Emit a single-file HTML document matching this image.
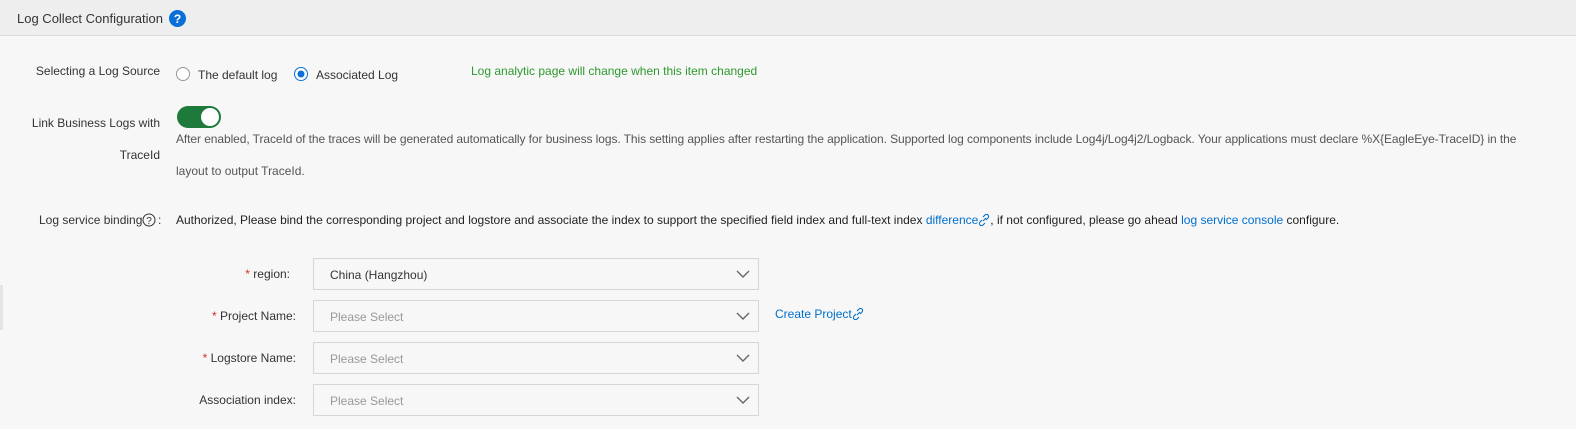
<!DOCTYPE html>
<html><head><meta charset="utf-8"><style>
*{margin:0;padding:0;box-sizing:border-box}
body{width:1576px;height:429px;overflow:hidden;background:#f7f7f7;font-family:"Liberation Sans",sans-serif;font-size:12px;color:#333;position:relative}
.hdr{position:absolute;left:0;top:0;width:1576px;height:36px;background:#eeeeee;border-bottom:1px solid #d9d9d9}
.a{position:absolute;white-space:nowrap;line-height:16px}
.r{text-align:right}
.sel{position:absolute;left:313px;width:446px;height:32px;border:1px solid #d6d6d6;background:#f7f7f7}
.sel span{position:absolute;left:16px;top:8px;line-height:16px;color:#999}
.sel svg{position:absolute;right:8px;top:10px}
.star{color:#d93026}
.lk{color:#0070cc}
.g{color:#555}
</style></head><body>
<div class="hdr"></div>
<div class="a" style="left:17px;top:11px;font-size:13px;color:#333">Log Collect Configuration</div>
<svg style="position:absolute;left:169px;top:10px" width="17" height="17"><circle cx="8.5" cy="8.5" r="8.5" fill="#0a6fd6"/><text x="8.5" y="13" font-size="12" font-weight="bold" fill="#fff" text-anchor="middle" font-family="Liberation Sans">?</text></svg>

<div class="a r" style="right:1416px;top:63px">Selecting a Log Source</div>
<svg style="position:absolute;left:176px;top:67px" width="14" height="14"><circle cx="7" cy="7" r="6.5" fill="#fff" stroke="#999"/></svg>
<div class="a" style="left:198px;top:67px">The default log</div>
<svg style="position:absolute;left:294px;top:67px" width="14" height="14"><circle cx="7" cy="7" r="6.5" fill="#fff" stroke="#0a6fd6"/><circle cx="7" cy="7" r="3.5" fill="#0a6fd6"/></svg>
<div class="a" style="left:316px;top:67px">Associated Log</div>
<div class="a" style="left:471px;top:63px;color:#2e9a2e">Log analytic page will change when this item changed</div>

<div class="a r" style="right:1416px;top:115px">Link Business Logs with</div>
<div class="a r" style="right:1416px;top:147px">TraceId</div>
<div style="position:absolute;left:177px;top:106px;width:44px;height:22px;border-radius:11px;background:#1e7a3a"><div style="position:absolute;right:2px;top:2px;width:18px;height:18px;border-radius:9px;background:#fff"></div></div>
<div class="a g" style="left:176px;top:131px;letter-spacing:-0.08px">After enabled, TraceId of the traces will be generated automatically for business logs. This setting applies after restarting the application. Supported log components include Log4j/Log4j2/Logback. Your applications must declare %X{EagleEye-TraceID} in the</div>
<div class="a g" style="left:176px;top:163px">layout to output TraceId.</div>

<div class="a" style="left:39px;top:212px">Log service binding</div>
<svg style="position:absolute;left:142px;top:213px" width="14" height="14"><circle cx="7" cy="7" r="6" fill="none" stroke="#333"/><text x="7" y="11" font-size="10" fill="#333" text-anchor="middle" font-family="Liberation Sans">?</text></svg>
<div class="a" style="left:158px;top:212px">:</div>
<div class="a" style="left:176px;top:212px;color:#222">Authorized, Please bind the corresponding project and logstore and associate the index to support the specified field index and full-text index <span class="lk">difference<svg width="12" height="12" style="vertical-align:-2px"><path d="M5 7l3-3M4 6l-2 2a2 2 0 003 3l2-2M8 6l2-2a2 2 0 00-3-3L5 3" fill="none" stroke="#0070cc" stroke-width="1.1"/></svg></span>, if not configured, please go ahead <span class="lk">log service console</span> configure.</div>

<div class="a r" style="right:1286px;top:266px"><span class="star">*</span> region:</div>
<div class="sel" style="top:258px"><span style="color:#333">China (Hangzhou)</span><svg width="14" height="10"><path d="M1 2l6 6 6-6" fill="none" stroke="#666" stroke-width="1.4"/></svg></div>
<div class="a r" style="right:1280px;top:308px"><span class="star">*</span> Project Name:</div>
<div class="sel" style="top:300px"><span>Please Select</span><svg width="14" height="10"><path d="M1 2l6 6 6-6" fill="none" stroke="#666" stroke-width="1.4"/></svg></div>
<div class="a lk" style="left:775px;top:306px">Create Project<svg width="12" height="12" style="vertical-align:-2px"><path d="M5 7l3-3M4 6l-2 2a2 2 0 003 3l2-2M8 6l2-2a2 2 0 00-3-3L5 3" fill="none" stroke="#0070cc" stroke-width="1.1"/></svg></div>
<div class="a r" style="right:1280px;top:350px"><span class="star">*</span> Logstore Name:</div>
<div class="sel" style="top:342px"><span>Please Select</span><svg width="14" height="10"><path d="M1 2l6 6 6-6" fill="none" stroke="#666" stroke-width="1.4"/></svg></div>
<div class="a r" style="right:1280px;top:392px">Association index:</div>
<div class="sel" style="top:384px"><span>Please Select</span><svg width="14" height="10"><path d="M1 2l6 6 6-6" fill="none" stroke="#666" stroke-width="1.4"/></svg></div>
<div style="position:absolute;left:0;top:285px;width:3px;height:45px;background:#e4e4e4"></div>
</body></html>
